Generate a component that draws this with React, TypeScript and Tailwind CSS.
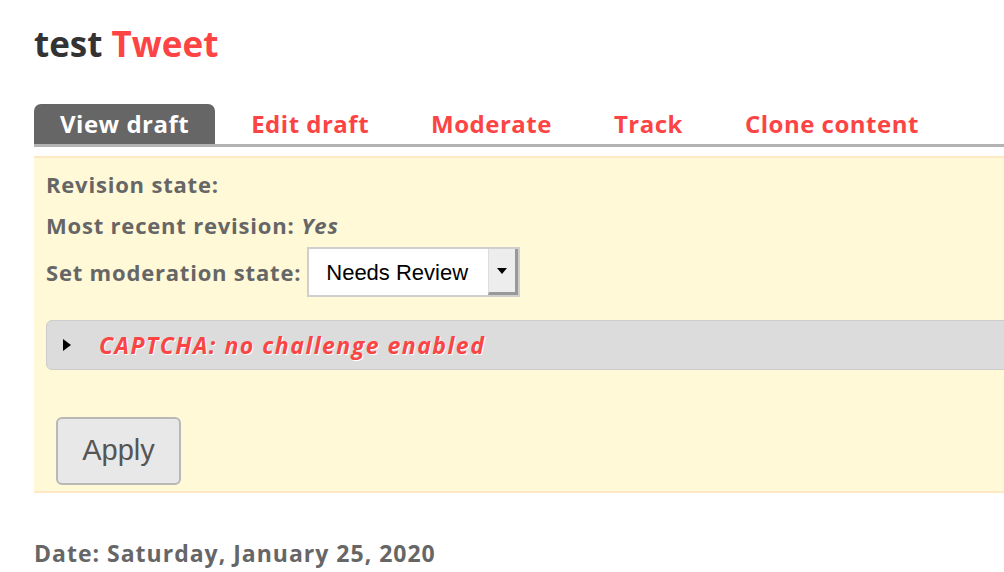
import React from 'react';

const tabs = ['Edit draft', 'Moderate', 'Track', 'Clone content'];

export default function App() {
  const font = { fontFamily: '"Open Sans", Lato, sans-serif' };
  return (
    <div className="min-h-[572px] bg-white pl-[34px] overflow-hidden" style={font}>
      <h1 className="pt-[22px] text-[35px] leading-[44px] font-bold text-[#333]">
        test <span className="text-[#fc4444]">Tweet</span>
      </h1>

      {/* tabs */}
      <div className="mt-[38px] flex items-end border-b-[3px] border-[#b3b3b3] w-[1200px]">
        <span className="h-[40px] px-[26px] flex items-center rounded-t-[7px] bg-[#666] text-white text-[24px] tracking-[0.5px] font-bold">
          View draft
        </span>
        {tabs.map((t) => (
          <span key={t} className="ml-[10px] h-[40px] px-[26px] flex items-center text-[#fc4444] text-[24px] tracking-[0.5px] font-bold">
            {t}
          </span>
        ))}
      </div>

      {/* moderation panel */}
      <div className="mt-[9px] w-[1200px] bg-[#fff9d7] border-t-[2px] border-b-[2px] border-[#ffe9c4] pl-[12px] pt-[12px] pb-[6px] text-[#666] text-[22px] tracking-[0.8px] font-bold">
        <div className="leading-[28px]">Revision state:</div>
        <div className="mt-[13px] leading-[28px]">
          Most recent revision: <em className="italic">Yes</em>
        </div>
        <div className="mt-[8px] flex items-center gap-[6px]">
          <span>Set moderation state:</span>
          <div className="flex h-[50px] w-[213px] border-2 border-[#cfcfcf] bg-white tracking-normal">
            <span className="flex-1 flex items-center pl-[17px] text-[22px] font-normal text-black" style={{ fontFamily: '"Liberation Sans", Arial, sans-serif' }}>
              Needs Review
            </span>
            <span className="w-[30px] flex items-center justify-center bg-[#ededed] border-r-[3px] border-b-[3px] border-[#999] border-l border-l-[#ddd]">
              <svg width="10" height="6" viewBox="0 0 10 6"><path d="M0 0h10L5 6z" fill="#000" /></svg>
            </span>
          </div>
        </div>

        <div className="mt-[23px] h-[50px] flex items-center bg-[#dcdcdc] border border-[#cccccc] rounded-l-[6px] pl-[16px]">
          <svg width="8" height="12" viewBox="0 0 8 12"><path d="M0 0l8 6-8 6z" fill="#000" /></svg>
          <span className="ml-[28px] italic text-[#fc4444] text-[23px] tracking-[1.5px] font-bold [text-shadow:1px_1px_0_#fff]">
            CAPTCHA: no challenge enabled
          </span>
        </div>

        <button className="mt-[47px] ml-[10px] h-[68px] w-[125px] rounded-[6px] bg-[#e8e8e8] border-2 border-[#b8b8b8] text-[29px] font-normal tracking-normal text-[#555]" style={{ fontFamily: '"Liberation Sans", Arial, sans-serif' }}>
          Apply
        </button>
      </div>

      <div className="mt-[43px] text-[23px] tracking-[1px] font-bold text-[#666]">Date: Saturday, January 25, 2020</div>
    </div>
  );
}
